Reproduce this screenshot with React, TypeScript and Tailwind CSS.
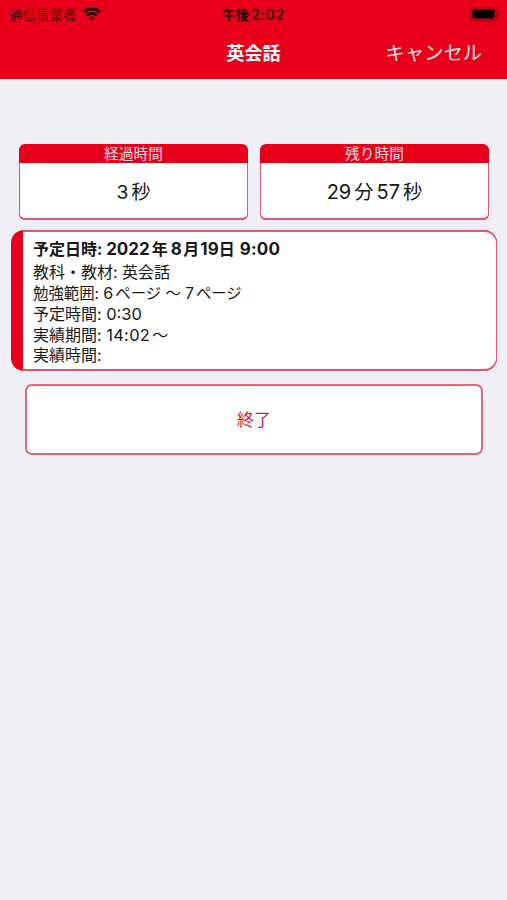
import type { ReactNode } from 'react';

function StatusBar() {
  return (
    <div className="grid h-[27px] grid-cols-3 items-center px-[9px] text-[#2a0004]">
      <div className="flex items-center gap-[7px]">
        <span className="pt-px text-[13.5px] leading-[27px] text-[#4a0008]">通信事業者</span>
        <svg className="-ml-[0.5px] -mt-[2px]" width="18" height="14" viewBox="0 0 18 14" fill="none" stroke="#180003" strokeWidth="2.7">
          <path d="M.8 5.1C5.5.9 12.5.9 17.2 5.1" />
          <path d="M3.9 8.4C6.8 5.6 11.2 5.6 14.1 8.4" />
          <path d="M6.2 10.9C7.8 9.4 10.2 9.4 11.8 10.9L9 13.7Z" fill="#180003" stroke="none" />
        </svg>
      </div>
      <div className="whitespace-nowrap pt-px text-center text-[13.5px] font-semibold leading-[27px]">
        午後<span className="ml-[2px] text-[14px] tracking-[0.6px]">2:02</span>
      </div>
      <svg className="-mr-[2px] -mt-[2px] justify-self-end" width="30" height="14" viewBox="0 0 30 14">
        <rect x=".7" y=".7" width="25.6" height="12.6" rx="3.5" fill="none" stroke="#a80010" strokeWidth="1.2" />
        <rect x="2.4" y="2.4" width="22.2" height="9.2" rx="1.8" fill="#000" />
        <path d="M27.6 4.7c2 .6 2 4 0 4.6z" fill="#a80010" />
      </svg>
    </div>
  );
}

function TimeCard({ title, children }: { title: string; children: ReactNode }) {
  return (
    <section className="flex h-[76px] flex-1 flex-col overflow-hidden rounded-[6px] bg-[#e8001b]">
      <h2 className="h-[19px] text-center text-[14.7px] leading-[20px] text-[#ffdfe3]">{title}</h2>
      <p className="flex flex-1 items-center justify-center rounded-b-[6px] border-x border-b-2 border-[#e4566d] bg-white pt-[3px] text-[19.3px]">{children}</p>
    </section>
  );
}

export default function App() {
  return (
    <div className="flex h-[900px] w-[507px] flex-col bg-[#f0eff5] font-['Inter','Noto_Sans_CJK_JP',sans-serif] text-[#171717]">
      <header className="h-[79px] bg-[#e8001b]">
        <StatusBar />
        <div className="grid h-[52px] grid-cols-3 items-center px-[25px] text-white">
          <span />
          <h1 className="text-center text-[18px] font-semibold">英会話</h1>
          <button className="justify-self-end whitespace-nowrap text-[19.3px] text-[#ffe3e6]">キャンセル</button>
        </div>
      </header>
      <main className="pt-[65px]">
        <div className="flex gap-[12px] px-[18px] pl-[19px]">
          <TimeCard title="経過時間">
            <span>3</span>
            <span className="ml-[3px]">秒</span>
          </TimeCard>
          <TimeCard title="残り時間">
            <span className="text-[20px]">29</span>
            <span className="ml-[3px]">分</span>
            <span className="ml-[3px] text-[20px]">57</span>
            <span className="ml-[3px]">秒</span>
          </TimeCard>
        </div>
        <section className="ml-[11px] mt-[10px] flex h-[141px] w-[486px] rounded-[13px] bg-[#e8001b] pl-[12px]">
          <div className="flex-1 whitespace-pre rounded-r-[13px] border-y-2 border-r border-[#e4566d] bg-white pl-[10px] pt-[6px] text-[16px] leading-[21px]">
            <p className="mb-px h-[23px] font-bold leading-[23px]">
              予定日時: <span className="text-[17px]">2022</span>
              <span className="ml-[2px]">年</span>
              <span className="ml-[3px] mr-[1.5px] text-[17px]">8</span>月
              <span className="ml-px text-[17px]">19</span>日
              <span className="ml-[5px] text-[17px] tracking-[0.2px]">9:00</span>
            </p>
            <p>教科・教材: 英会話</p>
            <p className="text-[15.4px]">
              勉強範囲: <span className="text-[16px]">6</span><span className="ml-[2px]">ページ</span> ～ 7<span className="ml-[2px]">ページ</span>
            </p>
            <p>予定時間: <span className="text-[16.5px]">0:30</span></p>
            <p>実績期間: <span className="text-[16.5px] tracking-[0.3px]">14:02</span><span className="ml-[2px]">～</span></p>
            <p className="-mt-px">実績時間:</p>
          </div>
        </section>
        <button className="ml-[25px] mt-[13px] block h-[71px] w-[458px] rounded-[7px] border-2 border-[#e4667b] bg-white pt-[2px] text-[17px] text-[#dc1735]">
          終了
        </button>
      </main>
    </div>
  );
}
